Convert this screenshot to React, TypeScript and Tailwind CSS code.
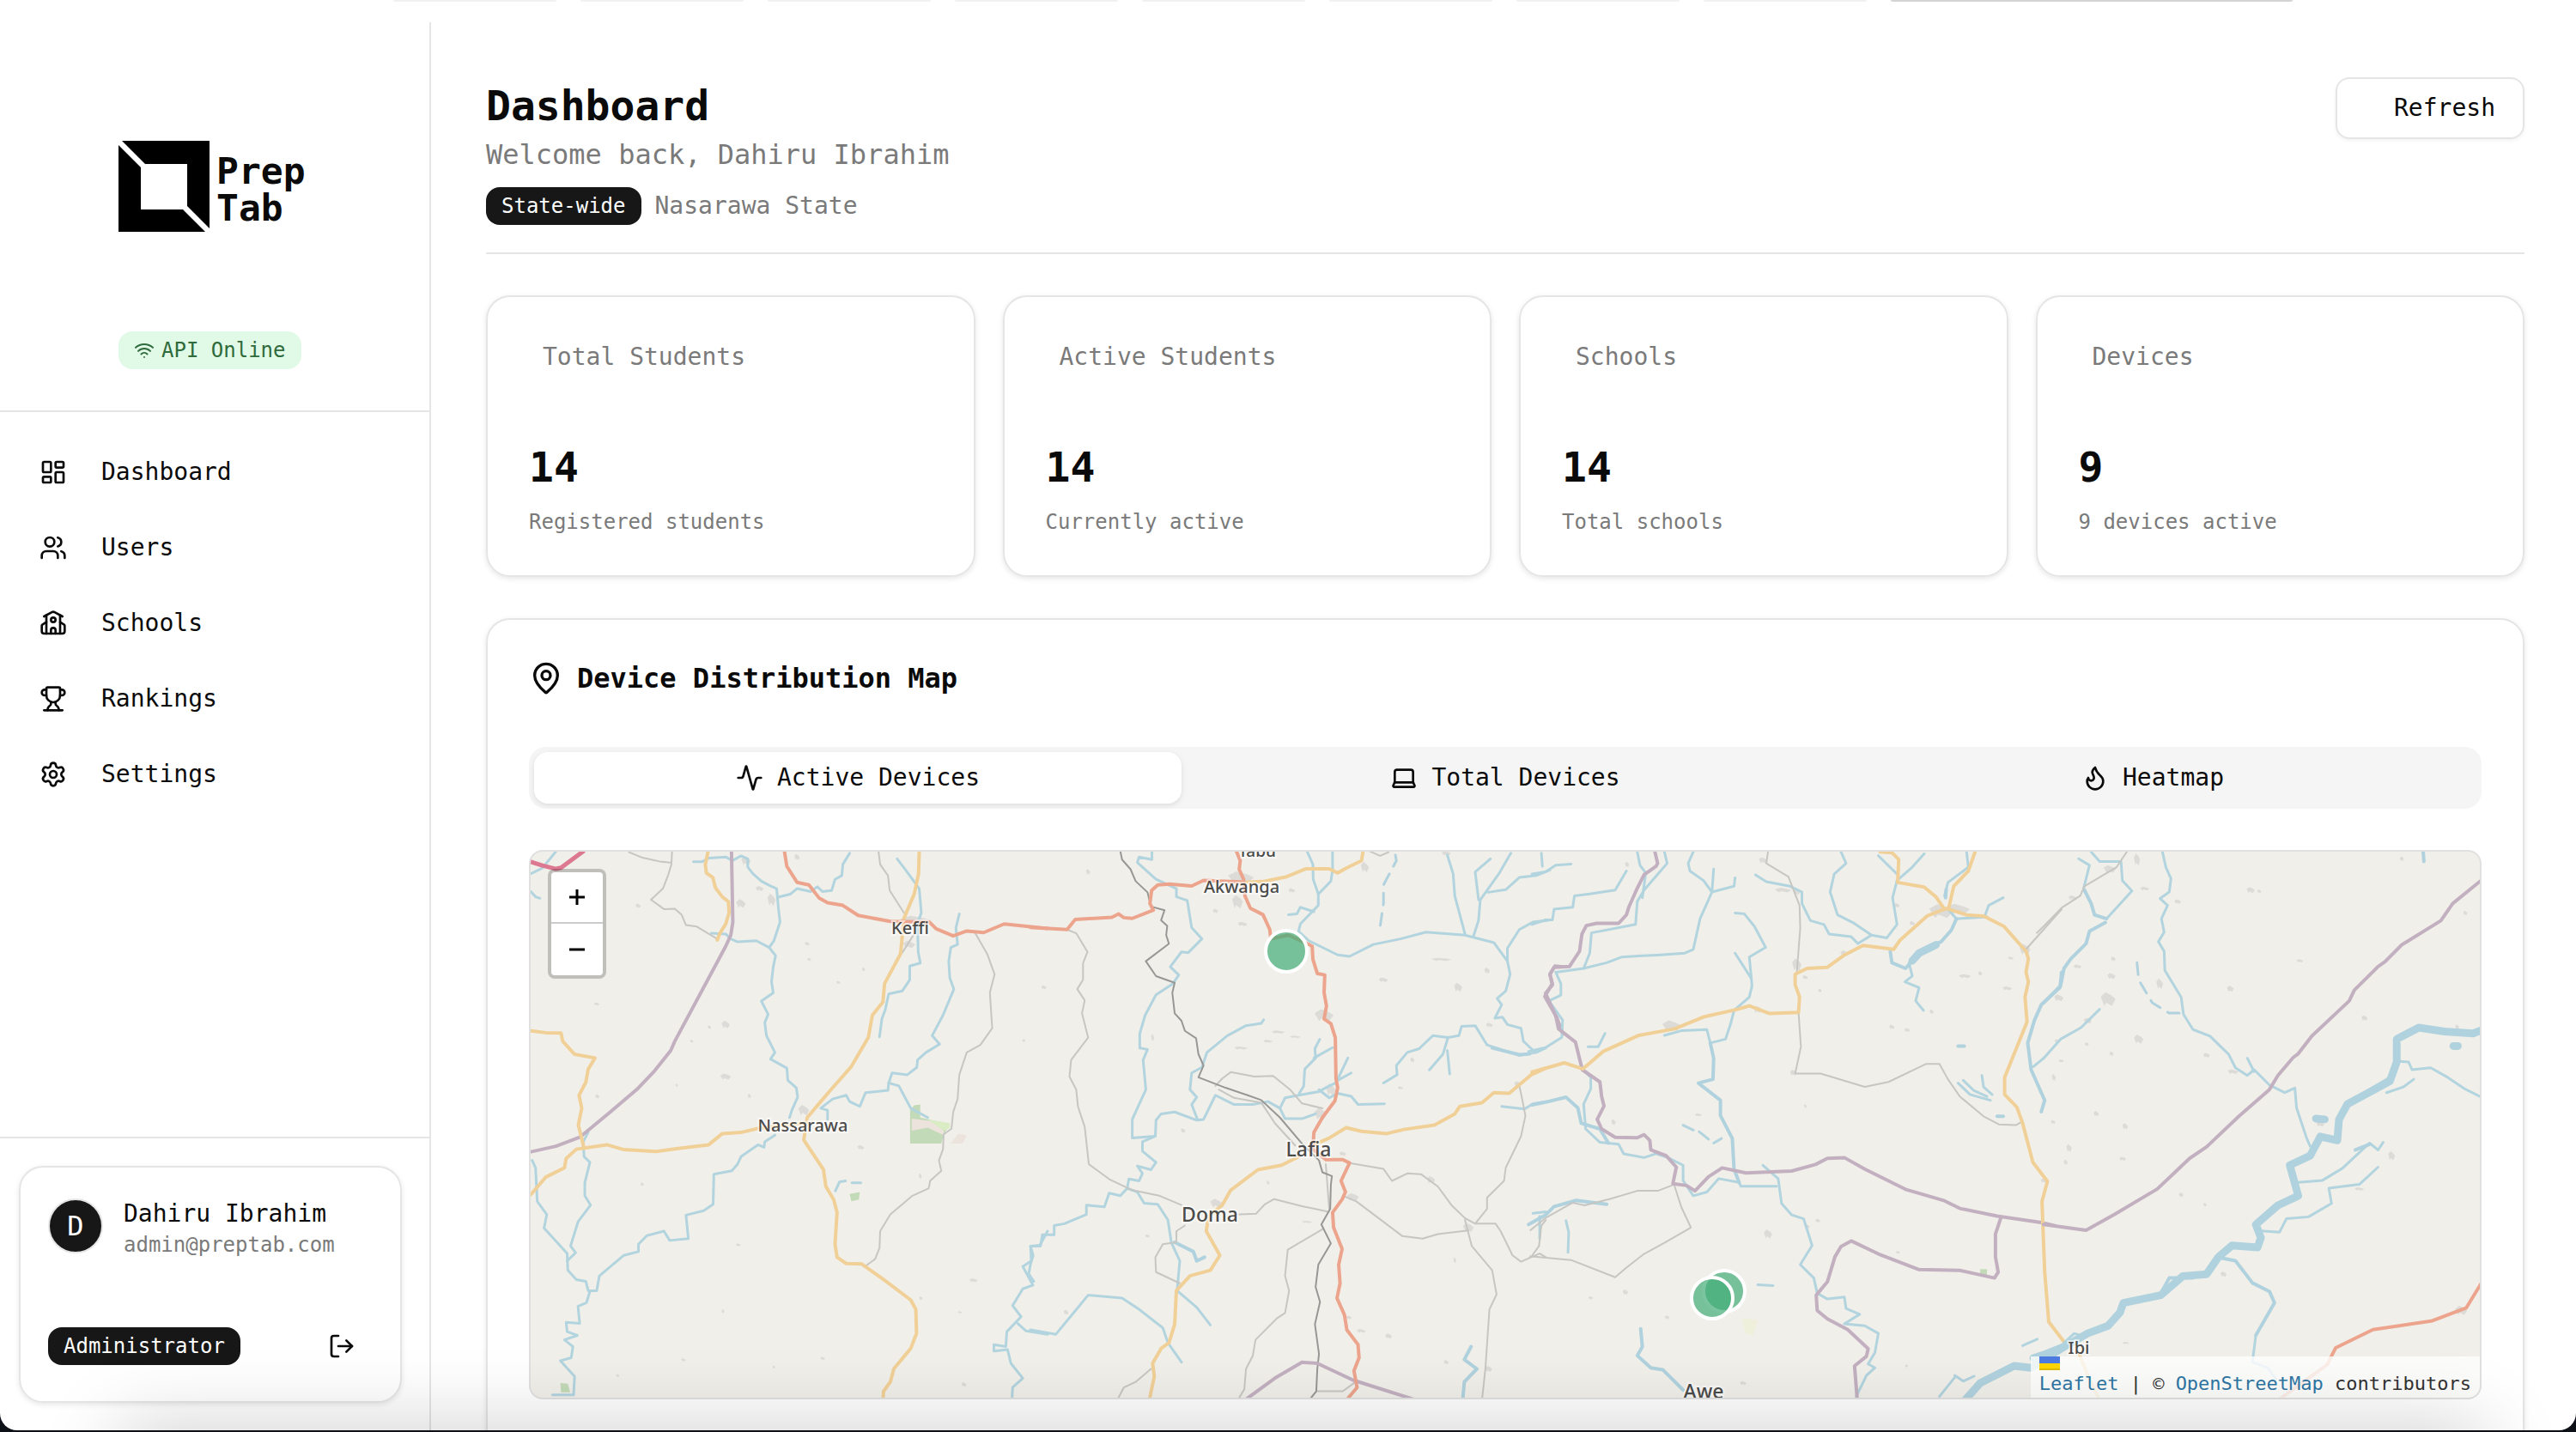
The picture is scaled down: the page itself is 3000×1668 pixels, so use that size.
import { useState } from "react";
import {
  Activity,
  Flame,
  Laptop,
  LayoutDashboard,
  LogOut,
  MapPin,
  School,
  Settings,
  Trophy,
  Users,
  Wifi,
} from "lucide-react";

type Kind = "river" | "stream" | "wide" | "dashed" | "primary" | "motorway" | "secondary" | "minor" | "rail" | "border";

type Tile = {
  x: number;
  h: number;
  lines: Partial<Record<Kind, string[]>>;
  // cx, cy, rx, ry of built-up areas
  towns: number[][];
};

const LINE_STYLE: Record<Kind, string> = {
  stream: "stroke-[#b2d4df] stroke-3",
  river: "stroke-[#b0d2de] stroke-4",
  wide: "stroke-[#b0d2de] stroke-9",
  dashed: "stroke-[#b0d2de] stroke-3 [stroke-dasharray:14_10]",
  minor: "stroke-[#c6c6c3] stroke-2",
  rail: "stroke-[#979795] stroke-2",
  border: "stroke-[#c2b0c0] stroke-4",
  secondary: "stroke-[#f1d097] stroke-4",
  primary: "stroke-[#eca48d] stroke-4",
  motorway: "stroke-[#dc7890] stroke-5",
};

const KINDS = Object.keys(LINE_STYLE) as Kind[];

const TILES: Tile[] = [
  {
    x: 600,
    h: 680,
    lines: {
      motorway: ["46,78 80,88 120,97 135,94 200,50"],
      minor: [
        "335,52 375,67 425,77 457,80",
        "462,50 460,85 450,115 435,150 400,180 438,205 470,204 490,220 503,248 535,252 597,286",
        "1070,50 1075,85 1098,115 1103,155 1145,215",
        "1175,272 1140,322",
        "1355,270 1390,325 1412,380 1398,430 1405,525 1370,570 1330,590 1308,650 1303,715 1290,750 1285,795 1262,810 1260,850 1248,880 1255,908 1222,935 1218,955 1170,975 1105,1025 1075,1070 1073,1115 1060,1145 1030,1165",
      ],
      secondary: [
        "568,50 560,85 563,108 582,120 590,148 610,172 628,185 630,215 620,245 603,270 595,288",
        "1190,50 1188,110 1175,165 1145,230 1135,325 1088,405 1083,455 1052,490 1040,550 990,628 930,690 900,722 860,765 850,825 908,905 915,950 938,985 948,1020 942,1105 948,1140 975,1157 1020,1158 1085,1200 1165,1255 1180,1280 1182,1345 1165,1385 1115,1440 1105,1475 1085,1500 1083,1525",
        "46,532 90,537 135,538 140,560 175,595 235,605 215,635 208,670 188,705 196,740 186,785 203,848",
        "46,972 90,925 145,900 150,875 180,850 270,838 320,851 415,856 480,848 570,838 610,808 665,805 720,793 850,780",
      ],
      border: ["637,50 641,240 635,275 620,305 470,560 458,585 410,640 360,688 280,750 190,818 120,842 46,857"],
      primary: ["793,50 800,90 830,133 865,140 895,175 920,188 965,195 1010,222 1105,238 1220,240 1240,258 1290,277 1330,264 1380,268 1440,245 1568,257"],
      stream: [
        "46,110 80,95 120,50",
        "46,158 60,172 73,176",
        "525,78 550,78 570,68 620,65 640,75 665,62 685,70 685,92 700,110 725,130 750,142 770,150 775,200 780,240 762,290 748,308 767,330 760,360 755,400 760,430 725,452 745,488 735,510 740,545 765,590 752,608 800,632 803,665 828,685 832,710 815,745 808,765",
        "578,270 620,272 635,285 655,293 710,290 748,308",
        "775,173 810,165 830,150 870,158 890,145 905,158 932,155 942,125 962,115 965,85 985,55",
        "1125,70 1150,100 1190,150 1196,215 1185,245 1187,320 1193,350 1162,358 1162,395 1140,425 1100,433 1090,475 1080,500 1073,548",
        "1308,218 1298,255 1303,300 1283,308 1277,345 1280,390 1292,420 1260,490 1228,545 1250,568 1210,590 1185,610 1183,630 1155,650 1110,645 1100,672 1098,692 1032,698 1015,735 985,722 975,705 935,715 900,740 920,745 920,770",
        "1100,672 1130,680 1165,740 1215,765",
        "765,812 735,830 733,845 715,838 665,870 655,890 638,908 585,917 583,998 555,1015 503,1027 510,1090 455,1095 438,1070 388,1082 363,1105 363,1125 320,1135 248,1190 240,1230 215,1230 208,1205 180,1200 155,1175 153,1130 85,1062 93,1025 65,990 60,900 50,880",
        "215,805 200,830 203,870 220,885 205,940 205,975 222,1000 185,1045 163,1110 178,1128 153,1150",
        "220,1232 210,1262 185,1272 190,1318 150,1315 153,1340 183,1350 145,1362 170,1380 165,1410 133,1418 175,1460 172,1510 110,1510",
        "943,962 955,938 973,935",
        "992,940 1018,940",
        "1568,1070 1545,1108 1518,1110 1520,1150 1495,1165 1525,1215 1495,1225 1465,1270 1490,1300 1448,1340 1445,1380 1410,1375 1410,1392 1450,1388 1460,1425 1495,1465 1465,1490 1463,1525",
        "1480,1318 1505,1338 1568,1347",
      ],
    },
    towns: [
      [850, 745, 16, 14], [1180, 235, 45, 12], [755, 180, 12, 16], [665, 190, 14, 12], [680, 75, 14, 12], [720, 150, 12, 7],
      [620, 655, 16, 8], [620, 515, 12, 10], [1018, 845, 10, 6], [830, 65, 8, 8], [1160, 300, 18, 10], [240, 460, 8, 4],
      [572, 522, 5, 5], [520, 560, 5, 4], [860, 298, 7, 5], [866, 340, 6, 4], [952, 402, 6, 4], [1026, 367, 5, 5],
      [657, 1107, 7, 4], [612, 1285, 4, 6], [1350, 1202, 12, 5], [1195, 1250, 5, 5], [906, 1412, 7, 4], [762, 1435, 4, 4],
      [496, 1416, 7, 4], [302, 1458, 5, 4], [1322, 1482, 7, 6], [374, 944, 5, 5], [1193, 922, 4, 8], [1498, 558, 5, 4],
      [242, 708, 6, 6], [690, 707, 5, 6], [476, 678, 4, 4], [1310, 1288, 7, 3], [362, 196, 8, 6],
    ],
  },
  {
    x: 1200,
    h: 680,
    lines: {
      primary: [
        "0,254 108,260 132,233 240,227 260,218 275,228 300,230 362,208 352,190 357,155 375,140 410,138 475,143 510,128 620,132",
        "607,50 618,75 615,98 628,125 632,170 648,203 685,220 705,260 708,285 760,275 820,300 830,305 832,340 845,378 867,382 865,430 872,465 865,500 885,513 898,550 900,660 905,685 897,720 860,765 835,805 832,850 870,878 920,878 940,887 915,935 928,965 918,985 890,1020 893,1060 918,1118 908,1160 912,1210 903,1250 925,1295 932,1335 965,1375 968,1410 953,1445 962,1490 930,1525",
      ],
      secondary: [
        "635,133 690,130 755,118 810,97 880,97 905,108 930,95 975,75 980,50",
        "830,840 880,820 930,792 975,802 1050,808 1100,797 1190,785 1250,755 1265,735 1330,725 1365,698 1410,700 1475,650 1518,632",
        "790,870 740,893 670,905 590,960 565,1000 525,1030 518,1070 558,1135 530,1175 470,1190 430,1230 425,1320 408,1370 385,1385 360,1425 365,1460 350,1525",
      ],
      rail: [
        "265,50 270,72 295,98 310,130 345,160 355,198 395,208 385,235 403,250 400,275 408,298 340,345 370,385 425,403 418,430 425,485 445,505 455,532 488,552 495,595 510,625 495,657 575,685 640,705 680,718 735,765 800,835 850,880 860,912 888,922 885,945 883,1010 857,1052 885,1103 848,1160 840,1220 853,1260 838,1320 850,1400 845,1440 842,1500 820,1525",
      ],
      minor: [
        "108,260 135,270 168,320 155,350 155,395 138,420 160,450 152,485 170,550 120,610 115,655 135,690 140,735 160,790 172,890 235,932 300,960 380,975 445,1000",
        "545,680 565,660 590,643 660,655 715,653 765,690 800,727 860,740",
        "555,690 600,712 680,725 720,780 780,840",
        "615,1025 665,1023 690,998 718,984 800,1003 878,1018",
        "860,1065 758,1120 750,1190 762,1230 750,1290 725,1305 663,1362 655,1405 635,1440 630,1495 610,1525",
        "940,887 1040,903 1065,935 1110,915 1150,917 1200,950 1240,1000 1280,1035 1310,1050 1345,1010 1345,980 1395,935 1400,900 1445,815 1458,760 1445,700 1440,680",
        "920,975 960,990 1095,1083 1155,1090 1200,1078 1290,1068",
        "1280,1040 1300,1110 1360,1175 1373,1240 1352,1280 1340,1440 1330,1525",
        "1310,1050 1370,1050 1385,1070 1420,1135 1445,1152 1500,1130 1518,1140",
        "1478,1135 1498,1110 1505,1055 1518,1040",
        "355,1440 310,1475 275,1490 255,1525",
        "455,1055 430,1070 430,1100 390,1105 368,1140 370,1180 440,1210",
        "845,1500 920,1500 958,1475",
        "870,890 880,1010",
        "1000,50 1030,62 1055,52",
      ],
      stream: [
        "358,50 358,72 320,65 315,80 370,125 430,150 430,172 462,182 475,255 505,285 465,322 445,320 412,360 437,382 420,405 370,435 338,490 322,540 322,578 345,582 332,610 340,690 300,770 300,820 368,815 370,772 385,755 425,750 490,772 510,770 545,705 600,730 655,730 700,722 735,740 750,712 790,705 850,695 880,680 900,672 935,605",
        "687,502 680,512 635,518 580,545 520,590 505,630 475,645 470,690 490,710 475,730 492,770",
        "792,700 805,680 808,635 840,605 838,580 852,555",
        "835,605 890,577",
        "850,690 880,712 905,700 945,708 965,730 1043,728",
        "735,740 750,768 800,768 840,755",
        "905,665 945,645",
        "368,815 330,830 330,855 370,885 355,905 315,895 330,915 320,935 290,930 285,955 265,975 232,968 218,1005 165,1000 165,1025 100,1050 70,1055 70,1080 35,1080 30,1110 0,1110 8,1135 0,1160 -5,1185 10,1205",
        "285,955 315,965 335,995 375,998 405,1040 415,1100 440,1150 432,1230 490,1275 530,1322",
        "0,1335 75,1347 115,1303 170,1242 270,1250 320,1280 390,1330 405,1370 445,1422",
        "815,50 832,85 833,125 848,165 848,195 795,245 790,265 820,290 905,328 940,332 1010,300 1090,285 1165,267 1280,275 1365,295 1405,345 1413,380 1400,425 1375,445 1388,462 1368,498 1390,495 1405,515 1445,525 1452,560 1485,588",
        "890,50 890,100 885,130 850,163",
        "760,220 785,218 795,200 835,212",
        "1228,60 1245,110 1250,170 1280,272",
        "1415,55 1380,110 1325,180 1320,235 1305,278",
        "1320,180 1310,105 1355,70",
        "1348,160 1400,153 1440,120 1490,115 1530,100",
        "1505,55 1508,90",
        "1405,345 1405,310 1440,260 1480,240 1525,235",
        "1040,672 1080,650 1078,625 1110,590 1145,580 1185,545 1230,550 1262,545 1270,520 1310,518 1345,570 1440,598 1490,590 1518,578",
        "1230,550 1215,595 1175,637",
        "1228,585 1235,648",
        "1388,735 1455,742 1480,728 1518,722",
        "1480,1022 1518,1018",
        "1500,1030 1500,1090",
      ],
      river: [
        "425,1100 480,1125 490,1150 513,1140",
        "1360,578 1440,596 1470,594",
        "1298,1380 1278,1415 1315,1440 1278,1475 1273,1525",
      ],
      dashed: ["1075,60 1078,75 1040,140 1040,190 1028,265"],
      border: [
        "630,1525 720,1465 800,1422 845,1425 950,1470 1140,1525",
        "1568,360 1545,358 1530,380 1537,405 1515,440 1550,495 1568,540",
      ],
    },
    towns: [
      [620, 120, 38, 16], [610, 185, 16, 18], [865, 490, 28, 16], [985, 92, 12, 14], [770, 155, 10, 6], [885, 690, 14, 16],
      [855, 755, 18, 16], [548, 995, 18, 12], [950, 978, 18, 10], [1180, 932, 12, 10], [1290, 1060, 16, 12], [1435, 675, 10, 8],
      [1040, 395, 14, 6], [1260, 415, 12, 12], [1345, 370, 8, 8], [1055, 1352, 10, 7], [1350, 1440, 10, 8], [545, 210, 8, 6],
      [625, 245, 14, 6], [730, 535, 20, 4], [700, 560, 14, 4], [780, 548, 16, 3], [620, 578, 20, 4], [450, 800, 7, 6],
      [345, 1083, 7, 4], [105, 1288, 7, 7], [40, 415, 8, 5], [170, 105, 6, 8], [1210, 340, 30, 4], [1352, 516, 10, 6],
      [1225, 1422, 7, 6], [975, 1338, 14, 5], [938, 1302, 8, 5], [1125, 610, 6, 7], [1090, 685, 8, 4], [360, 550, 4, 10],
      [1250, 1148, 4, 8], [815, 1045, 16, 3], [700, 940, 4, 6], [1225, 55, 14, 6], [920, 862, 10, 6],
    ],
  },
  {
    x: 1800,
    h: 698,
    lines: {
      border: [
        "322,50 330,80 325,88 290,110 270,145 245,195 238,215 215,237 150,237 120,243 107,265 100,310 70,350 25,352 13,370 20,398 0,420 30,480 38,513 88,548 108,620 160,652 165,690 172,715 152,750 165,775 205,797 270,798 290,790 307,805 310,830 355,845 385,875 375,918 415,923 440,937 480,900 520,877 590,890 725,885 795,868 830,852 880,850 940,880 1060,933 1175,963 1220,983 1330,1003 1460,1020 1500,1028",
        "1340,1010 1325,1050 1325,1110 1333,1150 1322,1165 1220,1145 1100,1143 980,1102 900,1068 870,1083 852,1110 830,1175 797,1210 800,1250 830,1272 890,1300 950,1350 945,1370 910,1395 918,1485",
      ],
      secondary: [
        "-40,626 0,616 55,602 110,618 170,572 275,530 380,513 465,482 560,463 600,453 660,473 745,470 748,430 735,398 735,370 770,355 830,352 880,320 935,295 1025,305 1045,280 1125,217 1180,198 1240,215 1290,218 1350,245 1415,310 1422,330 1415,365 1422,390 1412,430 1418,495 1352,640 1352,685 1388,718 1405,760 1435,862 1478,912 1462,965 1470,1150 1482,1280 1527,1332",
        "985,50 1020,52 1040,70 1037,130 1115,142 1150,168 1175,200",
        "1265,50 1245,100 1202,140 1188,195",
      ],
      minor: [
        "655,50 650,80 715,115 748,190 750,250 740,365",
        "745,470 752,560 735,630 810,630 940,665 1010,652 1120,605 1160,605 1185,645 1220,690 1290,742 1335,763 1385,765 1405,755",
        "1415,305 1470,250 1520,200",
        "375,922 330,937 270,937 190,958 115,975 80,968 0,1008 -45,1040",
        "380,925 400,980 428,1033 350,1073 290,1102 235,1140 205,1163 75,1118 0,1112 -45,1108",
      ],
      stream: [
        "350,50 358,80 290,150 270,180 265,240 135,262 130,315 112,355",
        "270,50 278,85 295,105 285,170",
        "30,365 45,395 45,425 10,440 50,490 48,535 0,562 -50,572",
        "30,365 112,355 180,340 225,325 285,322 330,320 410,315 435,305 455,225 490,155 495,95",
        "490,155 555,140 558,118",
        "490,155 465,125 425,100 420,80 435,50",
        "-40,108 0,102 30,85 75,82",
        "-40,240 0,228 20,228 25,200 80,195 85,165 130,160 205,150 238,100",
        "110,620 133,640 133,670 112,710 118,775 160,810 215,815 230,840 290,850 325,840 360,850 405,870 405,910 435,950 475,940 510,905 570,915 575,925 680,925",
        "618,110 650,128 720,140 755,155 755,185 780,230 820,240 835,265 900,272 920,290 960,268 1005,275 1035,240 1022,170 1035,125",
        "870,50 885,80 850,108 838,155 860,215 905,235 960,268",
        "980,60 1035,108",
        "1035,125 1080,90 1115,55",
        "1185,200 1210,225 1300,220",
        "1295,215 1305,190 1348,170",
        "1240,50 1245,90 1185,130 1175,165",
        "1070,340 1080,375 1058,390 1100,405 1090,440 1113,465",
        "558,210 585,212 615,245 648,300 600,325 608,400 600,430 555,465 545,500 530,540 485,550 475,515 400,518 350,530",
        "558,315 605,380",
        "640,870 685,905 695,970 725,1000 760,1010 785,1080 750,1130 790,1165 800,1205 830,1220 880,1215 885,1245 925,1260 880,1285 940,1290 980,1310 970,1360 950,1390 970,1400 945,1420 915,1475",
        "405,765 435,778",
        "452,782 480,802",
        "495,812 518,800",
        "60,1015 68,1045 66,1098",
        "1205,1420 1230,1435 1262,1422",
        "1160,1475 1205,1425",
        "1405,1342 1448,1325",
        "175,525 155,560 125,560",
        "625,1183 670,1185",
        "1215,655 1250,685 1310,700",
        "1230,648 1262,675 1300,690",
        "1285,635 1290,665 1315,685",
      ],
      river: [
        "-40,712 0,705 60,692 95,720 105,760 160,775 185,812",
        "485,550 495,590 493,645 450,655 515,700 515,740 550,800 555,880 570,915",
        "1210,225 1195,255 1165,285 1110,305 1060,355 1020,340 1015,310",
        "1180,148 1178,170",
        "-50,1025 0,1000 25,978 90,962 180,972",
        "280,1298 285,1345 270,1368 310,1400 345,1405 405,1458",
        "1520,365 1515,405 1460,450 1440,490 1420,550 1430,620 1470,700 1460,730",
        "1215,558 1233,558",
        "1330,742 1348,742",
      ],
      wide: ["1150,293 1100,315 1080,335", "1235,1485 1280,1440 1380,1395 1430,1400 1527,1345"],
    },
    towns: [
      [1165, 205, 35, 18], [1215, 200, 35, 14], [372, 505, 28, 14], [640, 72, 12, 8], [740, 345, 14, 16], [1412, 305, 16, 14],
      [625, 462, 12, 9], [700, 150, 25, 6], [880, 315, 12, 7], [740, 155, 10, 8], [655, 1050, 12, 12], [450, 738, 10, 4],
      [200, 757, 6, 8], [1468, 910, 10, 6], [765, 378, 8, 5], [1080, 237, 8, 6], [1035, 190, 8, 6], [1020, 508, 8, 6],
      [1065, 516, 8, 5], [1137, 468, 6, 6], [1235, 375, 18, 5], [1280, 368, 6, 6], [1360, 407, 14, 5], [765, 715, 4, 5],
      [802, 1015, 7, 5], [235, 1202, 8, 7], [358, 1268, 7, 5], [133, 1217, 7, 4], [582, 1440, 10, 5], [1038, 1098, 6, 4],
      [730, 628, 10, 8], [1370, 328, 8, 4], [240, 83, 6, 8], [808, 413, 5, 5], [770, 1030, 8, 6], [1063, 1395, 5, 4],
    ],
  },
  {
    x: 2380,
    h: 698,
    lines: {
      minor: ["-20,262 0,245 55,195 108,165 120,140 215,90 245,50"],
      stream: [
        "103,68 135,85 118,145 140,185 150,215 185,225 260,152 232,125 228,75 165,75 140,50",
        "0,590 50,540 110,510 165,462",
        "-30,612 0,590",
        "350,50 360,90 375,120 370,155 343,172 365,190 347,225 355,260 338,285 355,310 357,360 405,430 412,475 440,515 490,532 545,580 565,615 600,635 620,620 665,660 710,680 740,668 745,720 775,800 785,820",
        "600,590 620,625",
        "625,1315 615,1385 660,1400 685,1430",
        "1045,598 1075,600 1085,620 1140,615 1190,640 1240,670 1285,690",
        "1010,680 1060,665 1090,645",
        "750,915 820,910 880,878 960,812 985,830 1000,810",
        "640,1042 695,1045 715,1010 780,1005 848,970 840,930 930,920 985,875",
        "890,720 935,685 1020,640",
        "60,1335 90,1310 120,1318",
      ],
      river: [
        "182,235 135,258 125,290 80,330 60,355 50,400 0,445",
        "120,150 140,185 150,215 185,225",
        "1118,50 1120,75",
        "525,1113 565,1120 615,1178 665,1200 680,1230 625,1315",
        "345,1205 370,1165 440,1165",
        "918,830 960,815",
      ],
      wide: [
        "-30,1375 0,1366 60,1345 130,1310 190,1290 225,1255 235,1230 345,1210 410,1160 480,1155 515,1110 555,1080 630,1085 640,1060 625,1025 690,975 750,950 725,870 785,845 815,795 865,805 870,750 895,710 1020,650 1040,600 1040,540 1105,510 1180,520 1265,525 1295,515",
        "802,748 828,750",
        "1207,558 1220,558",
      ],
      dashed: ["275,340 280,385 320,445 370,472 405,472"],
      border: [
        "1295,120 1205,185 1170,230 1055,293 1005,338 985,350 915,412 900,440 790,532 750,578 735,588 690,635 665,672 575,742 480,822 430,852 335,932 210,998 125,1040 0,1025",
      ],
      primary: ["1295,1170 1245,1243 1145,1277 970,1300 860,1348 835,1392 690,1485"],
      secondary: ["105,1365 130,1420 165,1485"],
    },
    towns: [
      [275, 70, 9, 16], [195, 95, 18, 10], [610, 150, 12, 8], [190, 435, 22, 18], [342, 395, 10, 14], [280, 540, 14, 12],
      [550, 408, 10, 8], [45, 432, 14, 9], [755, 335, 10, 4], [558, 625, 16, 6], [1230, 1250, 18, 12], [1025, 845, 10, 12],
      [815, 762, 12, 7], [945, 485, 9, 7], [130, 492, 12, 8], [930, 932, 14, 4], [200, 375, 12, 8], [155, 735, 8, 7],
      [240, 768, 8, 8], [75, 825, 8, 10], [30, 640, 6, 9], [530, 1155, 9, 7], [405, 947, 7, 6], [298, 146, 14, 5],
      [395, 180, 10, 6], [100, 350, 12, 5], [205, 330, 7, 6], [85, 170, 12, 6], [1055, 68, 6, 6], [1242, 210, 6, 6],
      [635, 153, 6, 5], [480, 582, 10, 6], [233, 853, 10, 5], [65, 862, 6, 7], [52, 597, 8, 4], [40, 545, 8, 5],
      [200, 578, 6, 6], [475, 973, 5, 5], [28, 757, 7, 5], [1218, 508, 6, 6], [242, 1335, 10, 3], [127, 553, 6, 5],
    ],
  },
];

const PLACES = [
  { name: "Tabu", x: 1464, y: 998, size: 19 },
  { name: "Akwanga", x: 1446, y: 1040, size: 20 },
  { name: "Keffi", x: 1060, y: 1088, size: 20 },
  { name: "Nassarawa", x: 935, y: 1318, size: 20 },
  { name: "Lafia", x: 1524, y: 1347, size: 23 },
  { name: "Doma", x: 1409, y: 1423, size: 23 },
  { name: "Awe", x: 1984, y: 1629, size: 23 },
  { name: "Ibi", x: 2421, y: 1577, size: 20 },
];

const MARKERS = [
  { x: 1498, y: 1108 },
  { x: 2008, y: 1504 },
  { x: 1994, y: 1512 },
];

const NAV = [
  { label: "Dashboard", icon: LayoutDashboard },
  { label: "Users", icon: Users },
  { label: "Schools", icon: School },
  { label: "Rankings", icon: Trophy },
  { label: "Settings", icon: Settings },
];

const STATS = [
  { title: "Total Students", value: 14, note: "Registered students" },
  { title: "Active Students", value: 14, note: "Currently active" },
  { title: "Schools", value: 14, note: "Total schools" },
  { title: "Devices", value: 9, note: "9 devices active" },
];

const TABS = [
  { label: "Active Devices", icon: Activity },
  { label: "Total Devices", icon: Laptop },
  { label: "Heatmap", icon: Flame },
];

function Logo() {
  return (
    <div className="flex items-center gap-2">
      <svg viewBox="0 0 106 106" className="size-[106px]" aria-hidden="true">
        <path d="M4 0H106V102L80 76V27H31Z" />
        <path d="M0 5L26 31V80H75L101 106H0Z" />
      </svg>
      <div className="pt-2 text-[43px] leading-[43px] font-bold">
        Prep
        <br />
        Tab
      </div>
    </div>
  );
}

function BaseMap() {
  return (
    <svg
      viewBox="618 992 2270 636"
      preserveAspectRatio="xMidYMid slice"
      className="absolute inset-0 size-full"
      role="img"
      aria-label="Device map"
    >
      {TILES.map((tile) => (
        <svg
          key={tile.x}
          x={tile.x}
          y={970}
          width={620}
          height={tile.h}
          viewBox="0 0 1568 1568"
          preserveAspectRatio="none"
          overflow="visible"
        >
          {tile.towns.map(([cx, cy, rx, ry]) => (
            <path
              key={`${cx}-${cy}`}
              className="fill-[#dcdbd8]"
              d={`M${cx - rx} ${cy - ry / 3}L${cx - rx / 3} ${cy - ry}L${cx + rx / 2} ${cy - ry / 2}L${cx + rx} ${cy}L${cx + rx / 2} ${cy + ry}L${cx - rx / 4} ${cy + ry / 2}L${cx - rx / 2} ${cy + ry}Z`}
            />
          ))}
          {tile.x === 600 && (
            <>
              <path className="fill-[#c3dab8]" d="M1163 745L1175 732L1193 730V765L1280 782L1262 810L1255 835H1163Z" />
              <path className="fill-[#ece4dc]" d="M1168 768L1230 775L1262 800V812L1215 792L1168 800Z" />
              <path className="fill-[#d9ecc4]" d="M1215 770L1280 780V793L1262 800Z" />
              <path className="fill-[#ece4dc]" d="M1305 808L1330 812L1318 835H1283Z" />
              <path className="fill-[#c3dab8]" d="M985 970L1015 965L1012 985L990 990Z" />
              <path className="fill-[#c3dab8]" d="M133 1478L155 1480L162 1503H135Z" />
            </>
          )}
          {tile.x === 1800 && (
            <>
              <path className="fill-[#c3dab8]" d="M1280 1142H1300V1160H1280Z" />
              <path className="fill-[#eff0dc]" d="M578 1270L625 1275L612 1315L588 1310Z" />
            </>
          )}
          {KINDS.map((kind) => (
            <g key={kind} fill="none" strokeLinejoin="round" strokeLinecap="round" className={LINE_STYLE[kind]}>
              {(tile.lines[kind] ?? []).map((points) => (
                <polyline key={points} points={points} vectorEffect="non-scaling-stroke" />
              ))}
            </g>
          ))}
        </svg>
      ))}

      {PLACES.map((p) => (
        <text
          key={p.name}
          x={p.x}
          y={p.y}
          fontSize={p.size}
          textAnchor="middle"
          paintOrder="stroke"
          className="fill-[#4b4b4a] stroke-white/60 stroke-4 font-['Noto_Sans',sans-serif] font-medium"
        >
          {p.name}
        </text>
      ))}

      {MARKERS.map((m) => (
        <circle key={m.x} cx={m.x} cy={m.y} r={24} className="fill-[#42ad77]/70 stroke-white stroke-4" />
      ))}
    </svg>
  );
}

function DeviceMap() {
  return (
    <div className="relative mt-12 h-[640px] overflow-hidden rounded-2xl border-2 border-[#e0e0e0] bg-[#f1efe9]">
      <BaseMap />
      <div className="absolute top-5 left-5 overflow-hidden rounded-lg border-4 border-black/20 bg-white bg-clip-padding">
        <button aria-label="Zoom in" className="flex h-[60px] w-[60px] items-center justify-center border-b-2 border-[#ccc]">
          <svg viewBox="0 0 20 20" className="size-5">
            <path d="M10 1V19M1 10H19" stroke="black" strokeWidth="3" />
          </svg>
        </button>
        <button aria-label="Zoom out" className="flex h-[60px] w-[60px] items-center justify-center">
          <svg viewBox="0 0 20 20" className="size-5">
            <path d="M1 10H19" stroke="black" strokeWidth="3" />
          </svg>
        </button>
      </div>
      <div className="absolute right-0 bottom-0 bg-white/80 px-2.5 text-[22px] leading-[32px] text-[#333]">
        <svg viewBox="0 0 12 8" className="h-4 w-6" aria-hidden="true">
          <path fill="#4C7BE1" d="M0 0h12v4H0z" />
          <path fill="#FFD500" d="M0 4h12v3H0z" />
          <path fill="#E0BC00" d="M0 7h12v1H0z" />
        </svg>
        <a href="#leaflet" className="text-[#2f76a3]">Leaflet</a> | ©{" "}
        <a href="#osm" className="text-[#2f76a3]">OpenStreetMap</a> contributors
      </div>
    </div>
  );
}

export default function App() {
  const [tab, setTab] = useState("Active Devices");

  return (
    <div className="relative h-screen overflow-hidden bg-[#0d1117] pb-0.5 font-['DejaVu_Sans_Mono',monospace] text-[28px] leading-10 text-[#0a0a0a]">
      <div className="relative flex h-full flex-col overflow-hidden rounded-b-[20px] bg-white">
        {/* lower edge of the browser's tab strip */}
        <div className="flex h-[26px] shrink-0 items-start gap-7 pl-[458px]">
          {[1, 2, 3, 4, 5, 6, 7, 8].map((n) => (
            <div key={n} className="h-0.5 w-[190px] rounded-b bg-[#f1f1f1]" />
          ))}
          <div className="h-0.5 w-[468px] rounded-b bg-[#d4d4d4]" />
        </div>

        <div className="flex min-h-0 flex-1">
          <aside className="flex w-[502px] shrink-0 flex-col border-r-2 border-[#e5e5e5]">
            <div className="flex flex-col items-start border-b-2 border-[#e5e5e5] pt-[138px] pb-12 pl-[138px]">
              <Logo />
              <div className="mt-[116px] flex h-11 items-center gap-2 rounded-2xl bg-[#e1fae7] px-[18px] text-2xl text-[#2f6a3b]">
                <Wifi className="size-6" />
                API Online
              </div>
            </div>

            <nav className="flex flex-1 flex-col gap-2 pt-[30px]">
              {NAV.map(({ label, icon: Icon }) => (
                <a key={label} href={`#${label.toLowerCase()}`} className="flex h-20 items-center gap-10 pl-[46px]">
                  <Icon className="size-8" />
                  {label}
                </a>
              ))}
            </nav>

            <div className="border-t-2 border-[#e5e5e5] pt-8 pr-8 pb-8 pl-[22px]">
              <div className="rounded-[28px] border-2 border-[#e5e5e5] px-8 pt-8 pb-6 shadow-[0_2px_6px_rgba(0,0,0,0.1)]">
                <div className="flex items-start gap-6">
                  <div className="mt-1 flex size-16 items-center justify-center rounded-full border-2 border-[#e5e5e5] bg-[#171717] text-[32px] text-white">
                    D
                  </div>
                  <div className="pt-1">
                    <div className="leading-9">Dahiru Ibrahim</div>
                    <div className="text-2xl leading-9 text-[#7a7a7a]">admin@preptab.com</div>
                  </div>
                </div>
                <div className="mt-[60px] flex h-20 items-center justify-between">
                  <span className="flex h-11 items-center rounded-2xl bg-[#171717] px-[18px] text-2xl text-white">
                    Administrator
                  </span>
                  <button aria-label="Log out" className="flex h-20 w-[72px] items-center justify-center">
                    <LogOut className="size-8" />
                  </button>
                </div>
              </div>
            </div>
          </aside>

          <main className="min-w-0 flex-1 overflow-hidden pt-16 pr-[60px] pl-16">
            <header className="flex items-start justify-between border-b-2 border-[#e5e5e5] pb-8">
              <div>
                <h1 className="text-5xl leading-[66px] font-bold">Dashboard</h1>
                <p className="text-[32px] leading-[48px] text-[#7a7a7a]">Welcome back, Dahiru Ibrahim</p>
                <div className="mt-3.5 flex h-11 items-center gap-4">
                  <span className="flex h-11 items-center rounded-2xl bg-[#171717] px-[18px] text-2xl text-white">
                    State-wide
                  </span>
                  <span className="text-[#7a7a7a]">Nasarawa State</span>
                </div>
              </div>
              <button className="flex h-[72px] w-[220px] items-center justify-end rounded-2xl border-2 border-[#e5e5e5] pr-8 shadow-[0_2px_4px_rgba(0,0,0,0.05)]">
                Refresh
              </button>
            </header>

            <section className="mt-12 grid grid-cols-4 gap-8">
              {STATS.map((s) => (
                <div
                  key={s.title}
                  className="rounded-[28px] border-2 border-[#e5e5e5] px-12 pt-[50px] pb-[46px] shadow-[0_2px_6px_rgba(0,0,0,0.1)]"
                >
                  <div className="pl-4 text-[#7a7a7a]">{s.title}</div>
                  <div className="mt-[76px] text-5xl leading-[64px] font-bold">{s.value}</div>
                  <div className="mt-4 text-2xl text-[#7a7a7a]">{s.note}</div>
                </div>
              ))}
            </section>

            <section className="mt-12 rounded-[28px] border-2 border-[#e5e5e5] px-12 pt-12 pb-24 shadow-[0_2px_6px_rgba(0,0,0,0.1)]">
              <h2 className="flex items-center gap-4 text-[32px] leading-10 font-bold">
                <MapPin className="size-10" />
                Device Distribution Map
              </h2>
              <div role="tablist" className="mt-[60px] grid h-[72px] grid-cols-3 rounded-[20px] bg-[#f5f5f5] p-1.5">
                {TABS.map(({ label, icon: Icon }) => (
                  <button
                    key={label}
                    role="tab"
                    aria-selected={tab === label}
                    onClick={() => setTab(label)}
                    className={`flex items-center justify-center gap-4 rounded-2xl ${tab === label ? "bg-white shadow-[0_2px_6px_rgba(0,0,0,0.1)]" : ""}`}
                  >
                    <Icon className="size-8" />
                    {label}
                  </button>
                ))}
              </div>
              <DeviceMap />
            </section>
          </main>
        </div>

        {/* soft shade rising from below the window */}
        <div className="pointer-events-none absolute -bottom-20 left-36 right-28 h-20 shadow-[0_0_90px_6px_rgba(0,0,0,0.18)]" />
      </div>
    </div>
  );
}
